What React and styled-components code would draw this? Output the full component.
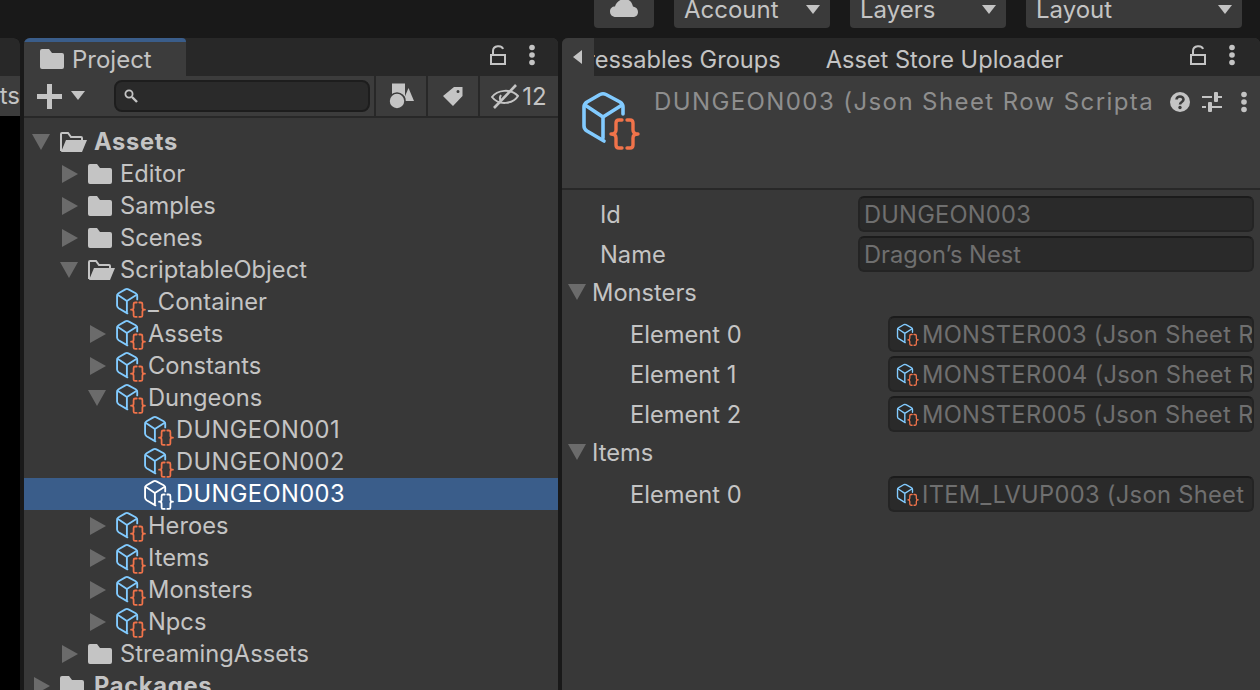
import React from 'react';
import styled, { createGlobalStyle } from 'styled-components';

const GlobalStyle = createGlobalStyle`
  html, body {
    margin: 0;
    padding: 0;
    background: #191919;
  }
  body {
    font-family: 'Inter', 'Liberation Sans', sans-serif;
  }
`;

const TEXT = '#c4c4c4';

const Page = styled.div`
  width: 1260px;
  height: 690px;
  overflow: hidden;
  display: flex;
  flex-direction: column;
  background: #191919;
  color: ${TEXT};
  font-size: 24px;
`;

const TopBar = styled.div`
  height: 38px;
  flex: none;
  display: flex;
  justify-content: flex-end;
  gap: 20px;
  padding-right: 18px;
  overflow: hidden;
`;

const TopButton = styled.div`
  width: ${(p) => p.$width}px;
  height: 37px;
  margin-top: -9px;
  box-sizing: border-box;
  padding: 0 10px;
  display: flex;
  align-items: center;
  justify-content: space-between;
  background: #3a3a3a;
  border-radius: 4px;
`;

const CloudButton = styled(TopButton)`
  justify-content: center;
  align-items: flex-end;
  padding-bottom: 11px;
`;

const Workspace = styled.div`
  flex: 1;
  min-height: 0;
  display: flex;
  gap: 4px;
`;

const Stub = styled.div`
  width: 20px;
  flex: none;
  display: flex;
  flex-direction: column;
  background: #000;
  border-top-right-radius: 6px;
  overflow: hidden;
`;

const StubTabs = styled.div`
  height: 38px;
  background: #282828;
`;

const StubTools = styled.div`
  height: 40px;
  background: #3c3c3c;
  display: flex;
  align-items: center;
  justify-content: flex-end;
  line-height: 1;
`;

const Panel = styled.div`
  display: flex;
  flex-direction: column;
  width: ${(p) => (p.$width ? `${p.$width}px` : 'auto')};
  flex: ${(p) => (p.$width ? 'none' : '1')};
  min-width: 0;
  background: #383838;
  border-radius: 6px 6px 0 0;
  overflow: hidden;
`;

const TabBar = styled.div`
  position: relative;
  height: 38px;
  flex: none;
  display: flex;
  align-items: stretch;
  background: #282828;
`;

const ActiveTab = styled.div`
  width: 162px;
  box-sizing: border-box;
  display: flex;
  align-items: center;
  gap: 8px;
  padding-left: 16px;
  background: #3c3c3c;
  border-top: 4px solid #3a5d8a;
  border-radius: 4px 4px 0 0;
`;

const TabActions = styled.div`
  margin-left: auto;
  width: ${(p) => p.$width}px;
  flex: none;
  display: flex;
  align-items: center;
  gap: 23px;
  padding-bottom: 4px;
  box-sizing: border-box;
`;

const Toolbar = styled.div`
  height: 42px;
  flex: none;
  box-sizing: border-box;
  display: flex;
  background: #3c3c3c;
  border-bottom: 2px solid #282828;
`;

const CreateMenu = styled.div`
  width: 90px;
  flex: none;
  display: flex;
  align-items: center;
  gap: 9px;
  padding-left: 13px;
  box-sizing: border-box;
`;

const SearchBox = styled.div`
  width: 256px;
  height: 32px;
  margin-top: 4px;
  flex: none;
  box-sizing: border-box;
  display: flex;
  align-items: center;
  padding-left: 8px;
  background: #2a2a2a;
  border: 2px solid #1d1d1d;
  border-radius: 8px;
`;

const ToolSlot = styled.div`
  width: ${(p) => p.$width}px;
  flex: none;
  display: flex;
  align-items: center;
  justify-content: center;
  gap: 3px;
  margin-left: ${(p) => p.$gap}px;
  border-left: 2px solid #282828;
  box-sizing: content-box;
`;

const Tree = styled.div`
  padding-top: 8px;
  font-size: 23.7px;
`;

const TreeRow = styled.div`
  height: 32px;
  flex: none;
  box-sizing: border-box;
  display: flex;
  align-items: center;
  padding-left: ${(p) => 8 + p.$level * 28}px;
  background: ${(p) => (p.$selected ? '#3a5d8a' : 'transparent')};
  color: ${(p) => (p.$selected ? '#fff' : TEXT)};
  white-space: nowrap;
`;

const TreeLabel = styled.span`
  margin-top: -2px;
  font-weight: ${(p) => (p.$bold ? 700 : 400)};
  margin-left: ${(p) => (p.$bold ? 2 : 0)}px;
  letter-spacing: ${(p) => (p.$bold ? 0.7 : p.$caps ? 0.4 : 0)}px;
`;

const ArrowSlot = styled.div`
  width: 28px;
  flex: none;
  display: flex;
  align-items: center;
  padding-left: ${(p) => (p.$open ? 0 : 2)}px;
  box-sizing: border-box;
`;

const Triangle = styled.div`
  width: 0;
  height: 0;
  ${(p) =>
    p.$open
      ? `
    border-left: 9px solid transparent;
    border-right: 9px solid transparent;
    border-top: 16px solid #6b6b6b;
  `
      : `
    border-top: 9px solid transparent;
    border-bottom: 9px solid transparent;
    border-left: 16px solid #6b6b6b;
  `}
`;

const TreeIconSlot = styled.div`
  width: 32px;
  flex: none;
  display: flex;
  align-items: center;
`;

const TreeCube = styled.div`
  margin-left: -1px;
`;

const Tabs = styled.div`
  position: relative;
  flex: 1;
  min-width: 0;
  margin-left: 32px;
  padding-top: 4px;
  display: flex;
  align-items: center;
  gap: 45px;
  overflow: hidden;
  white-space: nowrap;
  font-size: 23.6px;
`;

const FirstTab = styled.span`
  margin-left: -53px;
`;

const BackButton = styled.div`
  position: absolute;
  left: 0;
  top: 0;
  bottom: 0;
  width: 32px;
  display: flex;
  align-items: center;
  justify-content: center;
  background: #3c3c3c;
`;

const BackArrow = styled.div`
  width: 0;
  height: 0;
  margin-right: 2px;
  border-top: 7px solid transparent;
  border-bottom: 7px solid transparent;
  border-right: 9px solid #c4c4c4;
`;

const InspectorHeader = styled.div`
  height: 114px;
  flex: none;
  box-sizing: border-box;
  display: flex;
  align-items: flex-start;
  padding: 12px 0 0 18px;
  background: #3c3c3c;
  border-bottom: 2px solid #282828;
`;

const HeaderIconSlot = styled.div`
  width: 74px;
  flex: none;
  margin-top: 2px;
`;

const Title = styled.div`
  width: 500px;
  flex: none;
  height: 30px;
  line-height: 28px;
  color: #8e8e8e;
  letter-spacing: 1.4px;
  overflow: hidden;
  white-space: nowrap;
`;

const HeaderActions = styled.div`
  flex: none;
  display: flex;
  align-items: center;
  height: 28px;
  margin-left: 16px;
  gap: 12px;
`;

const HeaderDots = styled.div`
  margin-left: 7px;
`;

const Fields = styled.div`
  padding: 4px 6px 0 0;
  font-size: 23.7px;
`;

const FieldRow = styled.div`
  height: 40px;
  display: flex;
  align-items: center;
  padding-left: ${(p) => p.$indent}px;
`;

const Foldout = styled.div`
  height: 40px;
  box-sizing: border-box;
  display: flex;
  align-items: center;
  gap: 6px;
  padding: 0 0 4px 6px;
`;

const FieldLabel = styled.div`
  flex: none;
  width: ${(p) => p.$width}px;
`;

const FieldBox = styled.div`
  flex: 1;
  min-width: 0;
  height: 36px;
  box-sizing: border-box;
  display: flex;
  align-items: center;
  gap: 3px;
  padding-left: ${(p) => p.$pad}px;
  background: #2a2a2a;
  border: 2px solid #242424;
  border-top-color: #1b1b1b;
  border-radius: 6px;
  color: #6f6f6f;
  letter-spacing: ${(p) => p.$spacing || 0}px;
  white-space: nowrap;
  overflow: hidden;
`;

const CubeIcon = ({ size, selected }) => (
  <svg width={size} height={size} viewBox="0 0 60 60" style={{ display: 'block', flex: 'none' }}>
    <g fill="none" strokeWidth="3.6" strokeLinecap="round" strokeLinejoin="round" stroke={selected ? '#fff' : '#82cbff'}>
      <path d="M43 24V17Q43 14 40 12L26 4.500Q23 3 20 4.500L7 12Q4 14 4 17V36Q4 39 7 41L24 51" />
      <path d="M5 15 23 27 42 15M23 27V48" />
    </g>
    <g fill="none" strokeWidth="3.4" strokeLinecap="round" strokeLinejoin="round" stroke={selected ? '#fff' : '#f0734a'}>
      <path d="M42 30H39Q36 30 36 33V40Q36 44 31 44 36 44 36 48V55Q36 58 39 58H42" />
      <path d="M47 30H50Q53 30 53 33V40Q53 44 58 44 53 44 53 48V55Q53 58 50 58H47" />
    </g>
  </svg>
);

const FolderIcon = () => (
  <svg width="24" height="20" viewBox="0 0 24 20" style={{ display: 'block' }}>
    <path fill={TEXT} d="M0 2a2 2 0 0 1 2-2h7l3 4h10a2 2 0 0 1 2 2v12a2 2 0 0 1-2 2H2a2 2 0 0 1-2-2z" />
  </svg>
);

const OpenFolderIcon = () => (
  <svg width="27" height="20" viewBox="0 0 27 20" style={{ display: 'block' }}>
    <path fill="none" stroke={TEXT} strokeWidth="2" d="M1 19V2a1 1 0 0 1 1-1h6l3 4h10a1 1 0 0 1 1 1v2" />
    <path fill={TEXT} d="M6 8h21l-5 12H1z" />
  </svg>
);

const LockIcon = () => (
  <svg width="16" height="20" viewBox="0 0 16 20" style={{ display: 'block' }}>
    <g fill="none" stroke={TEXT} strokeWidth="2">
      <rect x="1" y="10" width="14" height="9" />
      <path d="M3 10V6c0-6 9-6 10-2" />
    </g>
  </svg>
);

const DotsIcon = () => (
  <svg width="6" height="22" viewBox="0 0 6 22" style={{ display: 'block' }}>
    <g fill={TEXT}>
      <circle cx="3" cy="3.5" r="2.8" />
      <circle cx="3" cy="11" r="2.8" />
      <circle cx="3" cy="18.5" r="2.8" />
    </g>
  </svg>
);

const CloudIcon = () => (
  <svg width="28" height="17" viewBox="0 0 28 17" style={{ display: 'block' }}>
    <path fill={TEXT} d="M6 17C2 17 0 14.500 0 11.500 0 8.500 2 6.500 5 6.500 6 2.500 10 -1 14.500 -1 19 -1 22 2 23 6.500 26 7 28 9 28 12 28 15 26 17 22.500 17z" />
  </svg>
);

const DropArrow = styled.div`
  flex: none;
  width: 0;
  height: 0;
  border-left: 7px solid transparent;
  border-right: 7px solid transparent;
  border-top: 9px solid #c4c4c4;
  margin-top: -1px;
`;

const PlusIcon = () => (
  <svg width="25" height="25" viewBox="0 0 25 25" style={{ display: 'block' }}>
    <path fill={TEXT} d="M10 0h5v10h10v5H15v10h-5V15H0v-5h10z" />
  </svg>
);

const SearchIcon = () => (
  <svg width="14" height="14" viewBox="0 0 14 14" style={{ display: 'block' }}>
    <circle cx="5" cy="5" r="3.6" fill="none" stroke={TEXT} strokeWidth="1.8" />
    <path stroke={TEXT} strokeWidth="2.4" d="M8 8l5 5" />
  </svg>
);

const ShapesIcon = () => (
  <svg width="25" height="26" viewBox="0 0 25 26" style={{ display: 'block' }}>
    <rect x="3" y="0.500" width="13" height="13" fill={TEXT} />
    <path fill={TEXT} d="M19.500 5 25 18H14z" />
    <circle cx="8" cy="18" r="8" fill={TEXT} stroke="#3c3c3c" strokeWidth="1.6" />
  </svg>
);

const TagIcon = () => (
  <svg width="20" height="20" viewBox="0 0 20 20" style={{ display: 'block' }}>
    <path
      fill={TEXT}
      fillRule="evenodd"
      d="M11 1h8.500v9L10 20 0 10zM15 4a1.500 1.500 0 1 0 0 3 1.500 1.500 0 0 0 0-3z"
    />
  </svg>
);

const EyeOffIcon = () => (
  <svg width="28" height="25" viewBox="0 0 28 25" style={{ display: 'block' }}>
    <g fill="none" stroke={TEXT} strokeWidth="2">
      <path d="M1 13C6 6 20 4 27 12 22 20 8 22 1 13z" />
      <path d="M10 11a5 5 0 0 0 0 6" />
      <path strokeWidth="2.6" d="M25 1 3 24" />
    </g>
  </svg>
);

const HelpIcon = () => (
  <svg width="20" height="20" viewBox="0 0 20 20" style={{ display: 'block' }}>
    <circle cx="10" cy="10" r="10" fill={TEXT} />
    <path fill="none" stroke="#3c3c3c" strokeWidth="2.6" d="M6.500 7.500C6.500 3.500 13.500 3.500 13.500 7.500 13.500 10 10 10 10 12.500" />
    <circle cx="10" cy="15.500" r="1.700" fill="#3c3c3c" />
  </svg>
);

const SlidersIcon = () => (
  <svg width="20" height="20" viewBox="0 0 20 20" style={{ display: 'block' }}>
    <g fill={TEXT}>
      <rect x="0" y="4" width="10" height="2" />
      <rect x="12" y="0" width="4" height="10" rx="1" />
      <rect x="16" y="4" width="4" height="2" />
      <rect x="0" y="14" width="4" height="2" />
      <rect x="6" y="10" width="4" height="10" rx="1" />
      <rect x="10" y="14" width="10" height="2" />
    </g>
  </svg>
);

const treeItems = [
  { label: 'Assets', level: 0, arrow: 'open', icon: 'openFolder', bold: true },
  { label: 'Editor', level: 1, arrow: 'closed', icon: 'folder' },
  { label: 'Samples', level: 1, arrow: 'closed', icon: 'folder' },
  { label: 'Scenes', level: 1, arrow: 'closed', icon: 'folder' },
  { label: 'ScriptableObject', level: 1, arrow: 'open', icon: 'openFolder' },
  { label: '_Container', level: 2, icon: 'cube' },
  { label: 'Assets', level: 2, arrow: 'closed', icon: 'cube' },
  { label: 'Constants', level: 2, arrow: 'closed', icon: 'cube' },
  { label: 'Dungeons', level: 2, arrow: 'open', icon: 'cube' },
  { label: 'DUNGEON001', level: 3, icon: 'cube', caps: true },
  { label: 'DUNGEON002', level: 3, icon: 'cube', caps: true },
  { label: 'DUNGEON003', level: 3, icon: 'cube', caps: true, selected: true },
  { label: 'Heroes', level: 2, arrow: 'closed', icon: 'cube' },
  { label: 'Items', level: 2, arrow: 'closed', icon: 'cube' },
  { label: 'Monsters', level: 2, arrow: 'closed', icon: 'cube' },
  { label: 'Npcs', level: 2, arrow: 'closed', icon: 'cube' },
  { label: 'StreamingAssets', level: 1, arrow: 'closed', icon: 'folder' },
  { label: 'Packages', level: 0, arrow: 'closed', icon: 'folder', bold: true },
];

const renderTreeIcon = (item) => {
  if (item.icon === 'folder') return <FolderIcon />;
  if (item.icon === 'openFolder') return <OpenFolderIcon />;
  return (
    <TreeCube>
      <CubeIcon size={31} selected={item.selected} />
    </TreeCube>
  );
};

const ObjectRow = ({ label, value }) => (
  <FieldRow $indent={68}>
    <FieldLabel $width={258}>{label}</FieldLabel>
    <FieldBox $pad={6} $spacing={0.3}>
      <CubeIcon size={23} />
      {value}
    </FieldBox>
  </FieldRow>
);

const App = () => (
  <Page>
    <GlobalStyle />
    <TopBar>
      <CloudButton $width={60}>
        <CloudIcon />
      </CloudButton>
      <TopButton $width={156}>
        Account
        <DropArrow />
      </TopButton>
      <TopButton $width={156}>
        Layers
        <DropArrow />
      </TopButton>
      <TopButton $width={216}>
        Layout
        <DropArrow />
      </TopButton>
    </TopBar>
    <Workspace>
      <Stub>
        <StubTabs />
        <StubTools>ts</StubTools>
      </Stub>
      <Panel $width={534}>
        <TabBar>
          <ActiveTab>
            <FolderIcon />
            Project
          </ActiveTab>
          <TabActions $width={68}>
            <LockIcon />
            <DotsIcon />
          </TabActions>
        </TabBar>
        <Toolbar>
          <CreateMenu>
            <PlusIcon />
            <DropArrow />
          </CreateMenu>
          <SearchBox>
            <SearchIcon />
          </SearchBox>
          <ToolSlot $width={50} $gap={4}>
            <ShapesIcon />
          </ToolSlot>
          <ToolSlot $width={50} $gap={0}>
            <TagIcon />
          </ToolSlot>
          <ToolSlot $width={78} $gap={0}>
            <EyeOffIcon />
            12
          </ToolSlot>
        </Toolbar>
        <Tree>
          {treeItems.map((item, i) => (
            <TreeRow key={i} $level={item.level} $selected={item.selected}>
              <ArrowSlot $open={item.arrow === 'open'}>
                {item.arrow && <Triangle $open={item.arrow === 'open'} />}
              </ArrowSlot>
              <TreeIconSlot>{renderTreeIcon(item)}</TreeIconSlot>
              <TreeLabel $bold={item.bold} $caps={item.caps}>{item.label}</TreeLabel>
            </TreeRow>
          ))}
        </Tree>
      </Panel>
      <Panel>
        <TabBar>
          <Tabs>
            <FirstTab>Addressables Groups</FirstTab>
            <span>Asset Store Uploader</span>
          </Tabs>
          <BackButton>
            <BackArrow />
          </BackButton>
          <TabActions $width={70}>
            <LockIcon />
            <DotsIcon />
          </TabActions>
        </TabBar>
        <InspectorHeader>
          <HeaderIconSlot>
            <CubeIcon size={60} />
          </HeaderIconSlot>
          <Title>DUNGEON003 (Json Sheet Row Scriptable Object)</Title>
          <HeaderActions>
            <HelpIcon />
            <SlidersIcon />
            <HeaderDots>
              <DotsIcon />
            </HeaderDots>
          </HeaderActions>
        </InspectorHeader>
        <Fields>
          <FieldRow $indent={38}>
            <FieldLabel $width={258}>Id</FieldLabel>
            <FieldBox $pad={4} $spacing={0.2}>DUNGEON003</FieldBox>
          </FieldRow>
          <FieldRow $indent={38}>
            <FieldLabel $width={258}>Name</FieldLabel>
            <FieldBox $pad={4}>Dragon’s Nest</FieldBox>
          </FieldRow>
          <Foldout>
            <Triangle $open />
            Monsters
          </Foldout>
          <ObjectRow label="Element 0" value="MONSTER003 (Json Sheet Row Scriptable Object)" />
          <ObjectRow label="Element 1" value="MONSTER004 (Json Sheet Row Scriptable Object)" />
          <ObjectRow label="Element 2" value="MONSTER005 (Json Sheet Row Scriptable Object)" />
          <Foldout>
            <Triangle $open />
            Items
          </Foldout>
          <ObjectRow label="Element 0" value="ITEM_LVUP003 (Json Sheet Row Scriptable Object)" />
        </Fields>
      </Panel>
    </Workspace>
  </Page>
);

export default App;
